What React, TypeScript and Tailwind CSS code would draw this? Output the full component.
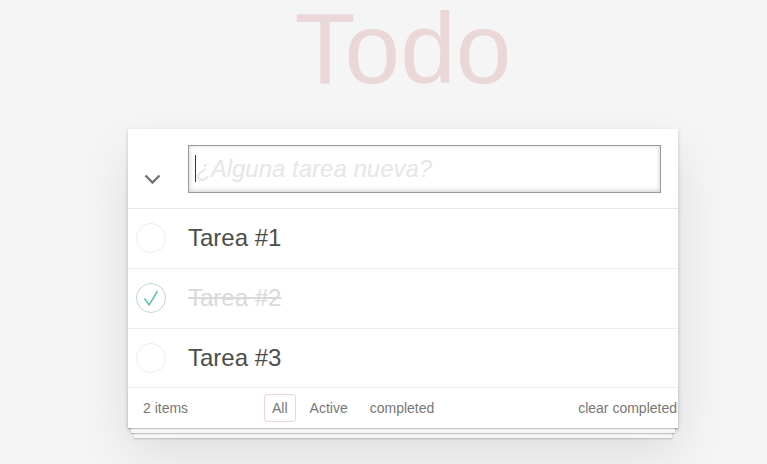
import React from "react"

interface Todo {
  id: number
  title: string
  done: boolean
}

const todos: Todo[] = [
  { id: 1, title: "Tarea #1", done: false },
  { id: 2, title: "Tarea #2", done: true },
  { id: 3, title: "Tarea #3", done: false },
]

function Toggle({ done }: { done: boolean }) {
  return (
    <div
      className={
        "ml-2 h-[30px] w-[30px] rounded-full border " +
        (done ? "border-[#bddad5]" : "border-[#ededed]")
      }
    >
      {done && (
        <svg viewBox="0 0 30 30" className="h-full w-full">
          <polyline
            points="8,15.5 13,22.5 22,7.5"
            fill="none"
            stroke="#5dc2af"
            strokeWidth="1.6"
          />
        </svg>
      )}
    </div>
  )
}

export default function App() {
  return (
    <div className="min-h-screen bg-[#f5f5f5] font-['Liberation_Sans',Arial,sans-serif] text-[#4d4d4d]">
      <div className="ml-[128px] w-[550px]">
        <h1 className="text-center text-[100px] leading-[96px] text-[rgba(175,47,47,0.15)]">Todo</h1>

        <section className="relative mt-[33px] bg-white shadow-[0_2px_4px_0_rgba(0,0,0,0.2),0_25px_50px_0_rgba(0,0,0,0.1)]">
          <header className="relative flex items-center border-b border-[#e6e6e6] pb-[15px] pl-[60px] pr-[17px] pt-4">
            <svg
              className="absolute left-[16px] top-[45px] h-[11px] w-[17px]"
              viewBox="0 0 17 11"
            >
              <polyline points="1.5,1.5 8.5,8.5 15.5,1.5" fill="none" stroke="#737373" strokeWidth="2.4" />
            </svg>
            <div className="relative flex-1">
              <input
                className="h-[48px] w-full border border-[#999] px-[7px] text-2xl italic text-[#4d4d4d] shadow-[inset_0_-1px_5px_0_rgba(0,0,0,0.2)] outline-none placeholder:text-[#e6e6e6]"
                placeholder="¿Alguna tarea nueva?"
              />
              <span className="absolute left-[7px] top-[10px] h-[27px] w-px bg-[#333]" />
            </div>
          </header>

          <ul>
            {todos.map((t) => (
              <li key={t.id} className="flex h-[59.8px] items-center border-b border-[#ededed]">
                <div className="flex w-[60px] items-center">
                  <Toggle done={t.done} />
                </div>
                <span
                  className={
                    "text-2xl leading-[1.2] " +
                    (t.done ? "text-[#d9d9d9] line-through" : "text-[#4d4d4d]")
                  }
                >
                  {t.title}
                </span>
              </li>
            ))}
          </ul>

          <footer className="relative flex h-[40px] items-center px-[15px] text-sm text-[#777]">
            <div className="absolute inset-x-0 bottom-0 h-[40px] shadow-[0_1px_1px_rgba(0,0,0,0.2),0_8px_0_-3px_#f6f6f6,0_9px_1px_-3px_rgba(0,0,0,0.2),0_16px_0_-6px_#f6f6f6,0_17px_2px_-6px_rgba(0,0,0,0.2)]" />
            <span className="relative w-[118px]">2 items</span>
            <ul className="relative flex">
              <li className="m-[3px]">
                <a className="block rounded-[3px] border border-[rgba(175,47,47,0.2)] px-[7px] py-[3px]">All</a>
              </li>
              <li className="m-[3px]">
                <a className="block rounded-[3px] border border-transparent px-[7px] py-[3px]">Active</a>
              </li>
              <li className="m-[3px]">
                <a className="block rounded-[3px] border border-transparent px-[7px] py-[3px]">completed</a>
              </li>
            </ul>
            <span className="relative ml-auto -mr-[14px]">clear completed</span>
          </footer>
        </section>
      </div>
    </div>
  )
}
